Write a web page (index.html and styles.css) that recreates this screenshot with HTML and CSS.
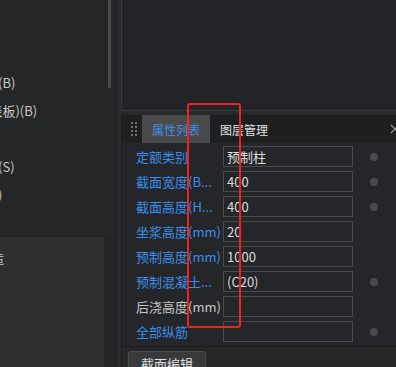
FILE: index.html
```html
<!DOCTYPE html>
<html lang="zh-CN">
<head>
    <meta charset="UTF-8">
    <meta name="viewport" content="width=device-width, initial-scale=1.0">
    <title>属性列表</title>
    <link rel="stylesheet" href="styles.css">
</head>
<body>
    <div class="app">
        <aside class="tree">
            <div class="tree-top">
                <div class="scroll-thumb"></div>
                <ul class="tree-list">
                    <li>预制柱(B)</li>
                    <li>墙板(表板)(B)</li>
                    <li>梁</li>
                    <li>预制梁(S)</li>
                    <li>预制柱)</li>
                    <li></li>
                </ul>
            </div>
            <div class="tree-bottom">
                <ul class="tree-list tree-list-low">
                    <li>构造</li>
                </ul>
                <div class="tree-gutter"></div>
            </div>
        </aside>

        <div class="splitter"></div>

        <main class="right">
            <div class="view"></div>

            <section class="dock">
                <div class="tabs">
                    <div class="grip">
                        <svg width="6" height="14" viewBox="0 0 6 14">
                            <rect x="0" y="0" width="2" height="2"/>
                            <rect x="4" y="0" width="2" height="2"/>
                            <rect x="0" y="4" width="2" height="2"/>
                            <rect x="4" y="4" width="2" height="2"/>
                            <rect x="0" y="8" width="2" height="2"/>
                            <rect x="4" y="8" width="2" height="2"/>
                            <rect x="0" y="12" width="2" height="2"/>
                            <rect x="4" y="12" width="2" height="2"/>
                        </svg>
                    </div>
                    <div class="tab active">属性列表</div>
                    <div class="tab">图层管理</div>
                    <button class="tab-close">
                        <svg width="10" height="10" viewBox="0 0 10 10">
                            <path d="M1 1L9 9M9 1L1 9"/>
                        </svg>
                    </button>
                </div>

                <div class="props">
                    <div class="prop-row">
                        <label class="prop-label">定额类别</label>
                        <input class="prop-input" type="text" value="预制柱" readonly>
                        <span class="prop-dot"></span>
                    </div>
                    <div class="prop-row">
                        <label class="prop-label">截面宽度(B...</label>
                        <input class="prop-input" type="text" value="400" readonly>
                        <span class="prop-dot"></span>
                    </div>
                    <div class="prop-row">
                        <label class="prop-label">截面高度(H...</label>
                        <input class="prop-input" type="text" value="400" readonly>
                        <span class="prop-dot"></span>
                    </div>
                    <div class="prop-row">
                        <label class="prop-label">坐浆高度(mm)</label>
                        <input class="prop-input" type="text" value="20" readonly>
                    </div>
                    <div class="prop-row">
                        <label class="prop-label">预制高度(mm)</label>
                        <input class="prop-input" type="text" value="1000" readonly>
                    </div>
                    <div class="prop-row">
                        <label class="prop-label">预制混凝土...</label>
                        <input class="prop-input" type="text" value="(C20)" readonly>
                        <span class="prop-dot"></span>
                    </div>
                    <div class="prop-row">
                        <label class="prop-label plain">后浇高度(mm)</label>
                        <input class="prop-input" type="text" value="" readonly>
                    </div>
                    <div class="prop-row">
                        <label class="prop-label">全部纵筋</label>
                        <input class="prop-input" type="text" value="" readonly>
                        <span class="prop-dot"></span>
                    </div>
                </div>

                <div class="foot">
                    <button class="edit-button">截面编辑</button>
                </div>
            </section>
        </main>

        <div class="mark"></div>
    </div>
</body>
</html>
```

FILE: styles.css
```css
body {
    margin: 0;
    padding: 0;
    font-family: "Noto Sans CJK SC", "Noto Sans", sans-serif;
    font-size: 13px;
    background-color: #27282a;
    overflow: hidden;
}

.app {
    display: flex;
    height: 100vh;
    position: relative;
}

/* left tree */
.tree {
    width: 116px;
    display: flex;
    flex-direction: column;
    background-color: #252628;
    overflow: hidden;
}

.tree-top {
    height: 237px;
    flex-shrink: 0;
    padding-top: 69px;
    box-sizing: border-box;
    position: relative;
}

.scroll-thumb {
    position: absolute;
    top: 0;
    left: 108px;
    width: 3px;
    height: 88px;
    border-radius: 0 0 2px 2px;
    background-color: #4a4b4d;
}

.tree-list {
    list-style: none;
    margin: 0 0 0 -41px;
    padding: 0;
    color: #c9c9c9;
}

.tree-list li {
    height: 28px;
    line-height: 28px;
    white-space: nowrap;
}

.tree-bottom {
    flex: 1;
    display: flex;
}

.tree-list-low {
    width: 104px;
    margin-left: 0;
    padding: 7px 0 0 0;
    text-indent: -22px;
    background-color: #2e2f31;
    overflow: hidden;
}

.tree-gutter {
    flex: 1;
    background-color: #232426;
}

.splitter {
    width: 4px;
    border-left: 1px solid #1d1e20;
    background-color: #2a2b2d;
}

/* right side */
.right {
    flex: 1;
    display: flex;
    flex-direction: column;
    min-width: 0;
    overflow: hidden;
}

.view {
    height: 111px;
    flex-shrink: 0;
    box-sizing: border-box;
    border-left: 1px solid #38393b;
    border-bottom: 1px solid #38393b;
    background-color: #232427;
    margin-bottom: 4px;
}

.dock {
    flex: 1;
    min-height: 0;
    display: flex;
    flex-direction: column;
    border-left: 1px solid #1c1d1f;
    background-color: #262729;
}

.tabs {
    height: 28px;
    flex-shrink: 0;
    display: flex;
    align-items: stretch;
    background-color: #1e1f21;
    font-size: 12px;
}

.grip {
    width: 20px;
    padding-left: 9px;
    box-sizing: border-box;
    display: flex;
    align-items: center;
}

.grip svg {
    fill: #717171;
}

.tab {
    display: flex;
    align-items: center;
    padding: 0 10px;
    color: #e2e2e2;
}

.tab.active {
    width: 68px;
    box-sizing: border-box;
    justify-content: center;
    padding: 0;
    background-color: #4a4a4b;
    color: #3b8fe9;
}

.tab-close {
    margin-left: auto;
    margin-right: -5px;
    width: 11px;
    padding: 0;
    border: none;
    background: none;
    display: flex;
    align-items: center;
}

.tab-close svg {
    stroke: #9a9a9a;
    stroke-width: 1.2;
    fill: none;
}

.props {
    flex-shrink: 0;
    padding: 3px 0 4px 14px;
    display: flex;
    flex-direction: column;
    gap: 4px;
    border-bottom: 1px solid #1b1c1e;
    background-color: #252629;
}

.prop-row {
    height: 21px;
    display: flex;
    align-items: center;
}

.prop-label {
    width: 87px;
    color: #3b8fe9;
    white-space: nowrap;
    overflow: hidden;
}

.prop-label.plain {
    color: #c8c8c8;
}

.prop-input {
    width: 130px;
    height: 21px;
    box-sizing: border-box;
    padding: 0 3px;
    border: 1px solid #4a4a4c;
    background-color: transparent;
    color: #dcdcdc;
    font-family: inherit;
    font-size: 13px;
    outline: none;
}

.prop-dot {
    width: 8px;
    height: 8px;
    margin-left: 17px;
    border-radius: 50%;
    background-color: #4a4a4c;
}

.foot {
    flex: 1;
    min-height: 0;
    padding: 4px 0 0 6px;
    overflow: hidden;
}

.edit-button {
    width: 78px;
    height: 24px;
    border: 1px solid #4b4c4e;
    border-radius: 3px;
    background-color: #38393b;
    color: #e0e0e0;
    font-family: inherit;
    font-size: 13px;
}

/* red annotation box */
.mark {
    position: absolute;
    left: 187px;
    top: 103px;
    width: 54px;
    height: 225px;
    box-sizing: border-box;
    border: 2px solid #e8251f;
    border-radius: 3px;
    pointer-events: none;
}
```
